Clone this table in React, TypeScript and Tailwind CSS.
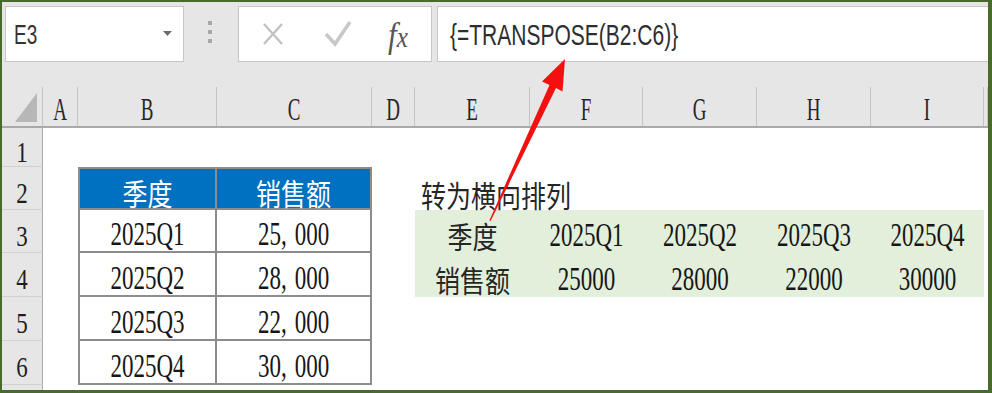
import type { ReactNode } from "react";

const colWidths = [
  "w-[35px]",
  "w-[139px]",
  "w-[155px]",
  "w-[43px]",
  "w-[115px]",
  "w-[113px]",
  "w-[114px]",
  "w-[114px]",
  "w-[113px]",
  "flex-1",
];
const colLetters = ["A", "B", "C", "D", "E", "F", "G", "H", "I", ""];
const rowHeights = ["h-[39px]", "h-[43px]", "h-[43px]", "h-[44px]", "h-[44px]", "h-[44px]"];

const quarters = ["2025Q1", "2025Q2", "2025Q3", "2025Q4"];
const sales = [25000, 28000, 22000, 30000];

function Num({ children }: { children: ReactNode }) {
  return (
    <span className="inline-block scale-y-[1.45] font-['Liberation_Serif',serif] text-[23px] leading-none text-[#161616]">
      {children}
    </span>
  );
}

function Han({ children, light }: { children: ReactNode; light?: boolean }) {
  return (
    <span
      className={
        light
          ? "inline-block scale-y-[1.18] whitespace-nowrap font-['Noto_Sans_CJK_SC',sans-serif] text-[25px] leading-none text-white"
          : "inline-block scale-y-[1.18] whitespace-nowrap font-['Noto_Sans_CJK_SC',sans-serif] text-[25px] leading-none text-[#262626]"
      }
    >
      {children}
    </span>
  );
}

// thousands separator drawn wide, like the sheet's number format
function Thousands({ value }: { value: number }) {
  const s = String(value);
  return (
    <Num>
      {s.slice(0, -3)}
      <span className="mr-[8px]">,</span>
      {s.slice(-3)}
    </Num>
  );
}

function cellFor(row: number, col: number): { cls: string; body: ReactNode } {
  let cls = "";
  let body: ReactNode = null;

  const inTable = (col === 1 || col === 2) && row >= 2 && row <= 6;
  if (inTable) {
    cls += " border-b-2 border-r-2 border-[#8c8c8c]";
    if (col === 1) cls += " border-l-2";
    if (row === 2) cls += " border-t-2 bg-[#0070c0]";
    if (row === 2) body = <Han light>{col === 1 ? "季度" : "销售额"}</Han>;
    else body = col === 1 ? <Num>{quarters[row - 3]}</Num> : <Thousands value={sales[row - 3]} />;
  }

  if (row === 2 && col === 4) {
    return {
      cls: " items-end justify-start pl-[6px] pb-[3px] overflow-visible",
      body: <Han>转为横向排列</Han>,
    };
  }

  if ((row === 3 || row === 4) && col >= 4 && col <= 8) {
    cls += " bg-[#e2efda]";
    if (col === 4) body = <Han>{row === 3 ? "季度" : "销售额"}</Han>;
    else body = <Num>{row === 3 ? quarters[col - 5] : sales[col - 5]}</Num>;
  }

  return { cls: cls + " items-center justify-center pt-[8px]", body };
}

function Toolbar() {
  return (
    <div className="flex h-[85px] shrink-0 items-start bg-[#e6e6e6] pt-[4px]">
      <div className="relative ml-[3px] flex h-[56px] w-[179px] items-center border border-[#c6c6c6] bg-white pl-[8px]">
        <span className="inline-block scale-y-[1.45] font-['Liberation_Sans',Arial,sans-serif] text-[19px] leading-none text-[#333]">
          E3
        </span>
        <svg className="absolute left-[157px] top-[24px]" width="10" height="6" viewBox="0 0 10 6">
          <polygon points="0,0 9,0 4.5,5" fill="#6b6b6b" />
        </svg>
      </div>
      <div className="ml-[24px] mt-[15px] flex flex-col gap-[5px]">
        <div className="h-[4px] w-[4px] bg-[#a8a8a8]" />
        <div className="h-[4px] w-[4px] bg-[#a8a8a8]" />
        <div className="h-[4px] w-[4px] bg-[#a8a8a8]" />
      </div>
      <div className="ml-[26px] flex h-[56px] w-[194px] items-center border border-[#c6c6c6] bg-white">
        <svg className="ml-[23px]" width="22" height="24" viewBox="0 0 22 24">
          <path d="M2 2 L20 22 M20 2 L2 22" stroke="#c2c2c2" strokeWidth="2.4" fill="none" />
        </svg>
        <svg className="ml-[40px]" width="28" height="28" viewBox="0 0 28 28">
          <path d="M2 14 L11 24 L26 2" stroke="#c8c8c8" strokeWidth="3.6" fill="none" />
        </svg>
        <span className="ml-[36px] inline-block scale-y-[1.15] font-['Liberation_Serif',serif] text-[31px] italic leading-none text-[#555]">
          f<span className="text-[25px]">x</span>
        </span>
      </div>
      <div className="ml-[5px] flex h-[56px] flex-1 items-center border-y border-l border-[#c6c6c6] bg-white pl-[12px]">
        <span className="inline-block scale-y-[1.38] font-['Liberation_Sans',Arial,sans-serif] text-[21px] leading-none text-[#2e2e2e]">
          {"{=TRANSPOSE(B2:C6)}"}
        </span>
      </div>
    </div>
  );
}

function ColumnHeader() {
  return (
    <div className="flex h-[41px] shrink-0 border-b-2 border-[#a9a9a9] bg-[#e6e6e6]">
      <div className="relative w-[41px] shrink-0 border-r border-[#c4c4c4]">
        <svg className="absolute left-[13px] top-[6px]" width="23" height="30" viewBox="0 0 23 30">
          <polygon points="22,0 22,29 0,29" fill="#b7b7b7" />
        </svg>
      </div>
      {colLetters.map((letter, i) => (
        <div
          key={i}
          className={`${colWidths[i]} flex shrink-0 items-center justify-center border-r border-[#c4c4c4] pt-[6px]`}
        >
          <span className="inline-block scale-y-[1.65] font-['Liberation_Serif',serif] text-[19px] leading-none text-[#262626]">
            {letter}
          </span>
        </div>
      ))}
    </div>
  );
}

function SheetRow({ row, height }: { row: number; height: string }) {
  return (
    <div className={`flex ${height} shrink-0`}>
      <div className="flex w-[41px] shrink-0 items-center justify-center border-b border-r border-b-[#d0d0d0] border-r-[#ababab] bg-[#e6e6e6] pt-[10px]">
        <span className="inline-block scale-y-[1.3] font-['Liberation_Serif',serif] text-[23px] leading-none text-[#1e1e1e]">
          {row}
        </span>
      </div>
      {colWidths.map((w, col) => {
        const { cls, body } = cellFor(row, col);
        return (
          <div key={col} className={`${w} flex shrink-0 ${cls}`}>
            {body}
          </div>
        );
      })}
    </div>
  );
}

export default function App() {
  return (
    <div className="relative box-border h-[393px] w-[992px] overflow-hidden border-b-[3px] border-l-2 border-r-4 border-t-2 border-[#486a2b] bg-white">
      <div className="flex h-full flex-col">
        <Toolbar />
        <ColumnHeader />
        {rowHeights.map((h, i) => (
          <SheetRow key={i} row={i + 1} height={h} />
        ))}
        <div className="flex flex-1">
          <div className="w-[41px] border-r border-[#ababab] bg-[#e6e6e6]" />
        </div>
      </div>
      {/* callout arrow from the transposed range up to the formula bar */}
      <svg
        className="pointer-events-none absolute left-[-2px] top-[-2px]"
        width="992"
        height="393"
        viewBox="0 0 992 393"
      >
        <polygon
          points="565,59 562.5,91.5 556,88 490.6,221 489.4,220.4 549.5,85 542,81.5"
          fill="#f51010"
        />
      </svg>
    </div>
  );
}
